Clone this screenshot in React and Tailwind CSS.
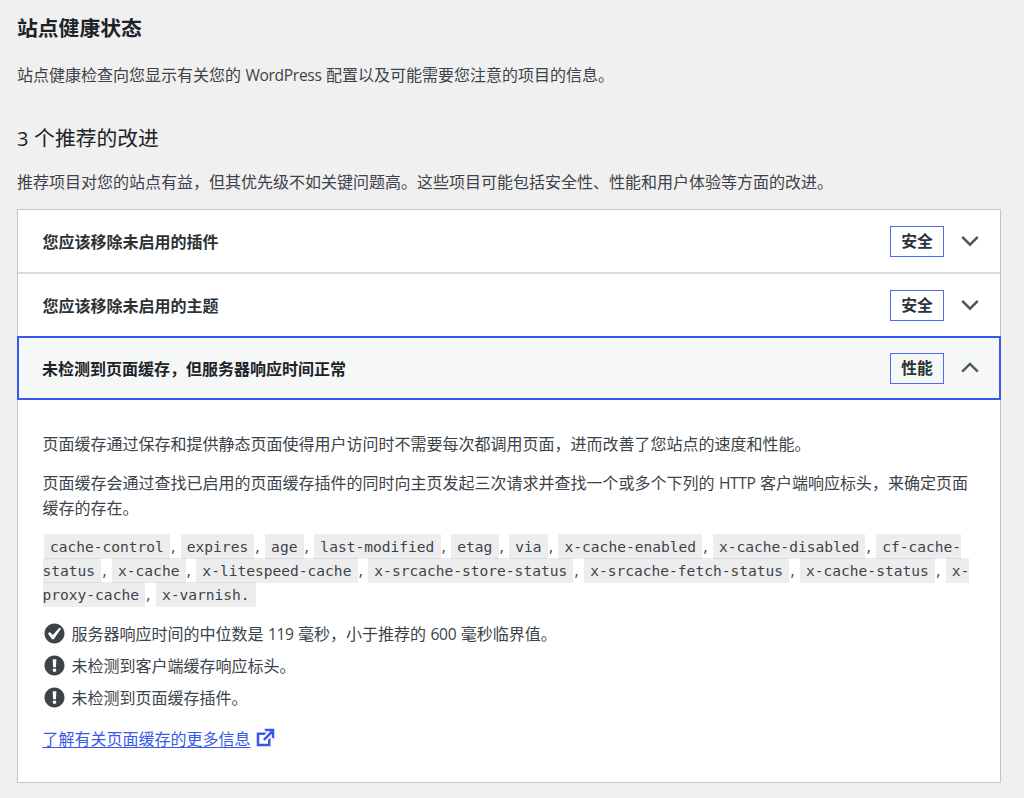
import React from "react";

const Lt = ({ children }) => (
  <span className="mx-[0.8px] font-['Open_Sans'] text-[15.6px] tracking-[-0.32px]">{children}</span>
);

function Chevron({ up }) {
  return (
    <svg width="18" height="12" viewBox="0 0 18 12" fill="none" stroke="#50575e" strokeWidth="2.5">
      <path d={up ? "M1.2 9.7 9 1.9l7.8 7.8" : "M1.2 1.9 9 9.7l7.8-7.8"} />
    </svg>
  );
}

const Badge = ({ children }) => (
  <span className="flex h-[31px] w-[54px] items-center justify-center border border-[#4f6cec] pb-px text-[15.8px] font-bold text-[#2c3338]">
    {children}
  </span>
);

function Row({ title, badge, open }) {
  return (
    <button
      className={
        open
          ? "-mx-px flex h-[64px] w-[984px] items-center border-2 border-[#3858e9] bg-[#f6f7f7] pl-[23px] pr-[20px] text-left text-[#1d2327]"
          : "flex h-[64px] w-full items-center border-b-2 border-[#d9d9da] pl-[24.5px] pr-[21px] text-left text-[#2c3338] nth-2:h-[62px] nth-2:border-0"
      }
    >
      <span className="flex-1 text-[16px] font-bold">{title}</span>
      <Badge>{badge}</Badge>
      <span className="ml-[17px]">
        <Chevron up={open} />
      </span>
    </button>
  );
}

const Code = ({ children }) => (
  <code className="mx-[1.2px] bg-black/[0.07] px-[6.2px] pt-[4px] pb-[4px] font-['DejaVu_Sans_Mono',monospace] text-[14.57px]">
    {children}
  </code>
);

const ICONS = {
  pass: "M10 2c-4.42 0-8 3.58-8 8s3.58 8 8 8 8-3.58 8-8-3.58-8-8-8zm-.615 12.66h-1.34l-3.24-4.54 1.341-1.25 2.569 2.4 5.141-5.931 1.34.94-5.811 8.381z",
  warn: "M10 2c4.42 0 8 3.58 8 8s-3.58 8-8 8-8-3.58-8-8 3.58-8 8-8zm1.13 9.38l.35-6.46H8.52l.35 6.46h2.26zm-.09 3.36c.24-.23.37-.55.37-.96 0-.42-.12-.74-.36-.97s-.59-.35-1.06-.35-.82.12-1.07.35-.37.55-.37.97c0 .41.13.73.38.96.26.23.61.34 1.06.34s.8-.11 1.05-.34z",
  external: "M9 3h8v8l-2-1V6.92l-5.6 5.59-1.41-1.41L14.08 5H10zm3 12v-3l2-2v7H3V6h8L9 8H5v7h7z",
};

const Icon = ({ name }) => (
  <svg width="25" height="25" viewBox="0 0 20 20" fill="currentColor">
    <path d={ICONS[name]} />
  </svg>
);

const Item = ({ icon, children }) => (
  <li className="flex h-8 items-center gap-[4.5px]">
    <span className="-ml-[0.5px] text-[#3c434a]">
      <Icon name={icon} />
    </span>
    <span>{children}</span>
  </li>
);

export default function App() {
  return (
    <main
      lang="zh-CN"
      className="h-[798px] w-[1024px] overflow-hidden whitespace-nowrap bg-[#f0f0f0] pl-[17px] pt-[11px] font-['Noto_Sans_CJK_SC',sans-serif] text-[16px] leading-[24px] text-[#3c434a]"
    >
      <h1 className="text-[20.8px] font-bold leading-[32px] text-[#1d2327]">站点健康状态</h1>
      <p className="mt-[19px]">
        站点健康检查向您显示有关您的 <Lt>WordPress</Lt> 配置以及可能需要您注意的项目的信息。
      </p>
      <h2 className="mt-[34px] text-[20.8px] leading-[32px] text-[#1d2327]">
        <span className="mr-px font-['Open_Sans'] text-[20px]">3</span> 个推荐的改进
      </h2>
      <p className="mt-[14px]">
        推荐项目对您的站点有益，但其优先级不如关键问题高。这些项目可能包括安全性、性能和用户体验等方面的改进。
      </p>

      <section className="mt-[16px] h-[574px] w-[984px] border border-[#c3c4c7] bg-white">
        <Row title="您应该移除未启用的插件" badge="安全" />
        <Row title="您应该移除未启用的主题" badge="安全" />
        <Row title="未检测到页面缓存，但服务器响应时间正常" badge="性能" open />

        <div className="pl-[24.5px] pt-[31px]">
          <p>页面缓存通过保存和提供静态页面使得用户访问时不需要每次都调用页面，进而改善了您站点的速度和性能。</p>
          <p className="mt-[15px]">
            页面缓存会通过查找已启用的页面缓存插件的同时向主页发起三次请求并查找一个或多个下列的 <Lt>HTTP</Lt> 客户端响应标头，来确定页面
            <br />
            缓存的存在。
          </p>
          <p className="mt-[16px] font-['Open_Sans'] leading-[23.8px] [word-spacing:-0.12px]">
            <Code>cache-control</Code>, <Code>expires</Code>, <Code>age</Code>, <Code>last-modified</Code>,{" "}
            <Code>etag</Code>, <Code>via</Code>, <Code>x-cache-enabled</Code>, <Code>x-cache-disabled</Code>,{" "}
            <Code>
              cf-cache-
              <br />
              status
            </Code>
            , <Code>x-cache</Code>, <Code>x-litespeed-cache</Code>, <Code>x-srcache-store-status</Code>,{" "}
            <Code>x-srcache-fetch-status</Code>, <Code>x-cache-status</Code>,{" "}
            <Code>
              x-
              <br />
              proxy-cache
            </Code>
            , <Code>x-varnish.</Code>
          </p>
          <ul className="mt-[11px]">
            <Item icon="pass">
              服务器响应时间的中位数是 <Lt>119</Lt> 毫秒，小于推荐的 <Lt>600</Lt> 毫秒临界值。
            </Item>
            <Item icon="warn">未检测到客户端缓存响应标头。</Item>
            <Item icon="warn">未检测到页面缓存插件。</Item>
          </ul>
          <a href="#" className="mt-[12px] flex items-center gap-[2px] text-[#3858e9]">
            <span className="underline underline-offset-2">了解有关页面缓存的更多信息</span>
            <Icon name="external" />
          </a>
        </div>
      </section>
    </main>
  );
}
